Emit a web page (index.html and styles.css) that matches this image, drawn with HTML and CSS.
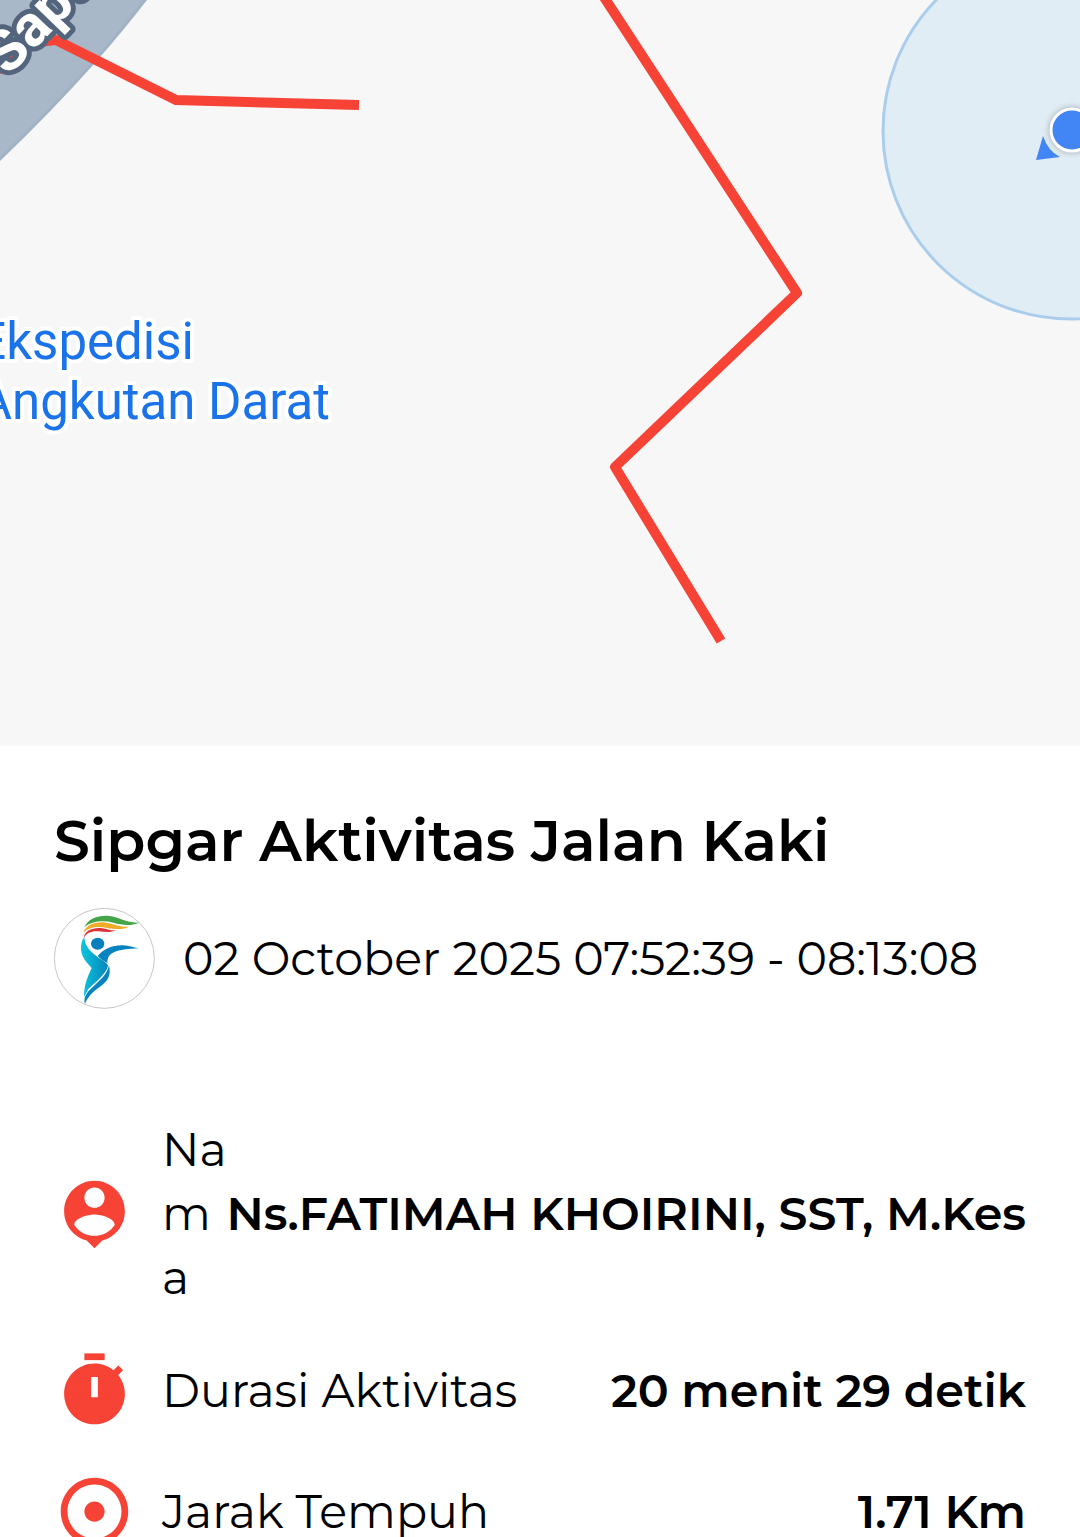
FILE: index.html
```
<!DOCTYPE html>
<html lang="id">
  <head>
    <meta charset="UTF-8" />
    <meta name="viewport" content="width=device-width, initial-scale=1.0" />
    <title>Sipgar Aktivitas Jalan Kaki</title>
    <link rel="stylesheet" href="styles.css">
  </head>
  <body>
    <div class="container">
      <svg class="map" viewBox="0 0 1080 746" role="img" aria-label="Peta rute">
        <path class="road" d="M-10 -10H155L145 0Q122 30 92 64Q50 111 0 159L-10 169Z" />

        <circle class="accuracy" cx="1071" cy="131" r="188" />

        <polyline class="route" points="-12,78 28,43 56,40 176,100 359,105" />
        <polyline class="route" points="600,-9 797,293 615,467 721,641" />

        <text class="road_name" transform="translate(8 77) rotate(-46)">Sapta</text>

        <text class="place" x="194" y="359">Ekspedisi</text>
        <text class="place" x="330" y="419">Angkutan Darat</text>

        <path class="heading" d="M1036 160L1043 136Q1048 151 1060 157Z" />
        <circle class="position" cx="1072" cy="130" r="21" />
      </svg>

      <main class="activity">
        <h1 class="title">Sipgar Aktivitas Jalan Kaki</h1>

        <div class="date_box">
          <svg class="logo" viewBox="42 39 303 303" aria-hidden="true">
            <defs>
              <linearGradient id="body" x1="0" y1="0" x2="1" y2="0">
                <stop offset="0" stop-color="#0cc6de" />
                <stop offset="1" stop-color="#0784bb" />
              </linearGradient>
            </defs>
            <circle cx="193" cy="190" r="150" fill="#fff" stroke="#aaa" stroke-width="2" />
            <path fill="#43a548" d="M133 97C145 70 177 60 207 63C239 66 252 83 298 83C270 94 246 90 220 83C190 75 155 78 133 97Z" />
            <path fill="#f0ac27" d="M130 112C139 88 169 78 199 83C225 87 237 97 267 95C242 106 222 102 202 99C174 93 151 94 130 112Z" />
            <path fill="#dc3434" d="M132 128C132 108 157 97 182 99C202 101 211 108 230 106C210 114 194 111 176 109C155 107 140 113 132 128Z" />
            <ellipse cx="173" cy="146" rx="20" ry="18" fill="#0580bd" />
            <path fill="url(#body)" d="M133 126C134 153 149 167 170 184C189 198 202 204 204 213C199 236 167 261 145 282L132 306C132 270 143 245 155 219C139 201 121 183 123 155C124 143 127 133 133 126Z" />
            <path fill="#0784bf" d="M173 183C192 161 218 150 249 151C268 152 280 158 296 160C267 162 245 163 225 170C207 177 202 188 202 204C190 199 181 191 173 183Z" />
            <path fill="#0784bf" d="M207 211C214 242 204 258 179 276C155 293 143 307 135 327C128 306 143 290 159 275C181 255 201 239 207 211Z" />
          </svg>
          <p class="date">02 October 2025 07:52:39 - 08:13:08</p>
        </div>

        <dl class="details">
          <div class="row">
            <svg class="icon" viewBox="0 0 24 24" aria-hidden="true">
              <path d="M12 2c-4.970 0-9 4.030-9 9 0 4.170 2.840 7.670 6.690 8.690L12 22l2.310-2.310C18.160 18.670 21 15.170 21 11c0-4.970-4.030-9-9-9zm0 2c1.660 0 3 1.340 3 3s-1.340 3-3 3-3-1.340-3-3 1.340-3 3-3zm0 14.300c-2.500 0-4.710-1.280-6-3.220.030-1.990 4-3.080 6-3.080 1.990 0 5.970 1.090 6 3.080-1.290 1.940-3.500 3.220-6 3.220z" />
            </svg>
            <dt class="label">Na<br>m<br>a</dt>
            <dd class="value">Ns.FATIMAH KHOIRINI, SST, M.Kes</dd>
          </div>
          <div class="row">
            <svg class="icon" viewBox="0 0 24 24" aria-hidden="true">
              <path d="M15 1H9v2h6V1z" />
              <path d="M11 14h2V8h-2v6zm8.030-6.610l1.420-1.420c-.430-.510-.900-.990-1.410-1.410l-1.420 1.420C16.070 4.740 14.120 4 12 4c-4.970 0-9 4.030-9 9s4.020 9 9 9 9-4.030 9-9c0-2.120-.740-4.070-1.970-5.610z" />
            </svg>
            <dt class="label">Durasi Aktivitas</dt>
            <dd class="value">20 menit 29 detik</dd>
          </div>
          <div class="row">
            <svg class="icon" viewBox="0 0 24 24" aria-hidden="true">
              <path d="M12 2C6.490 2 2 6.490 2 12s4.490 10 10 10 10-4.490 10-10S17.510 2 12 2zm0 18c-4.410 0-8-3.590-8-8s3.590-8 8-8 8 3.590 8 8-3.590 8-8 8zm3-8c0 1.660-1.340 3-3 3s-3-1.340-3-3 1.340-3 3-3 3 1.340 3 3z" />
            </svg>
            <dt class="label">Jarak Tempuh</dt>
            <dd class="value">1.71 Km</dd>
          </div>
        </dl>
      </main>
    </div>
  </body>
</html>
```
FILE: styles.css
```
html,
body,
div,
h1,
p,
dl,
dt,
dd {
  margin: 0;
  padding: 0;
}

html,
body {
  width: 100%;
  height: 100%;
}

body {
  background: #fff;
  color: #000;
  font-family: Montserrat, Inter, sans-serif;
}

.container {
  height: 100%;
  overflow: hidden;
}

/* map */
.map {
  display: block;
  width: 100%;
  background: #f7f7f7;
}
.road {
  fill: #a9b8c9;
  stroke: #a1b2c4;
  stroke-width: 3px;
}
.route {
  fill: none;
  stroke: #f64336;
  stroke-width: 10px;
  stroke-linejoin: round;
}
.road_name {
  fill: #fff;
  stroke: #53657d;
  stroke-width: 10px;
  stroke-linejoin: round;
  paint-order: stroke;
  font-family: Roboto, sans-serif;
  font-size: 58px;
  font-weight: 700;
}
.place {
  fill: #1a73e8;
  stroke: #fff;
  stroke-width: 8px;
  stroke-linejoin: round;
  paint-order: stroke;
  text-anchor: end;
  font-family: Roboto, sans-serif;
  font-size: 51px;
}
.accuracy {
  fill: #e1edf5;
  stroke: #abcdec;
  stroke-width: 3px;
}
.heading {
  fill: #4285f4;
}
.position {
  fill: #4285f4;
  stroke: #fff;
  stroke-width: 3px;
  filter: drop-shadow(0 0 3px rgba(0, 0, 0, 0.3));
}

/* activity */
.activity {
  padding: 55px 54px;
}
.title {
  font-size: 57px;
  font-weight: 600;
  line-height: 80px;
}
.date_box {
  display: flex;
  align-items: center;
  gap: 28px;
  margin-top: 27px;
}
.logo {
  flex: none;
  width: 101px;
  height: 101px;
}
.date {
  font-size: 46px;
  line-height: 64px;
}

.details {
  display: flex;
  flex-direction: column;
  gap: 40px;
  margin-top: 109px;
}
.row {
  display: flex;
  align-items: center;
}
.icon {
  flex: none;
  width: 81px;
  height: 81px;
  margin-right: 27px;
  fill: #f64336;
  fill-rule: evenodd;
}
.label {
  flex: 1;
  min-width: 0;
  font-size: 46px;
  line-height: 64px;
  white-space: nowrap;
}
.value {
  flex: none;
  font-size: 46px;
  font-weight: 600;
  line-height: 64px;
  text-align: right;
}
```
